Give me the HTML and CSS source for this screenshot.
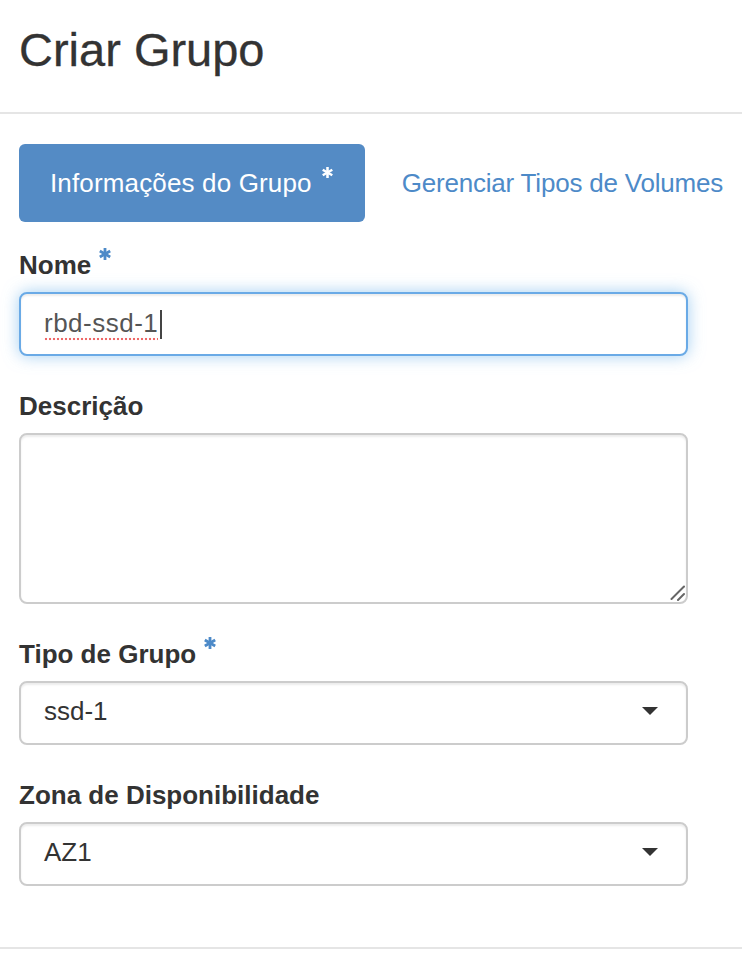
FILE: index.html
```html
<!DOCTYPE html>
<html lang="pt-BR">
<head>
<meta charset="utf-8">
<title>Criar Grupo</title>
<link rel="stylesheet" href="styles.css">
</head>
<body>
<div class="modal">
  <div class="modal-header">
    <h3 class="modal-title">Criar Grupo</h3>
  </div>
  <div class="modal-body">
    <ul class="tabs">
      <li class="tab tab-active">Informações do Grupo<svg class="req req-tab" viewBox="0 0 12 12" width="11" height="11"><g stroke="currentColor" stroke-width="2.8"><line x1="6" y1="0" x2="6" y2="12"/><line x1="0.8" y1="3" x2="11.2" y2="9"/><line x1="0.8" y1="9" x2="11.2" y2="3"/></g></svg></li>
      <li class="tab tab-link">Gerenciar Tipos de Volumes</li>
    </ul>
    <form class="form">
      <div class="form-group">
        <label class="label">Nome<svg class="req" viewBox="0 0 12 12" width="12" height="12"><g stroke="currentColor" stroke-width="2.8"><line x1="6" y1="0" x2="6" y2="12"/><line x1="0.8" y1="3" x2="11.2" y2="9"/><line x1="0.8" y1="9" x2="11.2" y2="3"/></g></svg></label>
        <div class="control control-focus"><span class="typed">rbd-ssd-1</span><span class="caret"></span></div>
      </div>
      <div class="form-group">
        <label class="label">Descrição</label>
        <div class="textarea-wrap">
          <textarea class="textarea"></textarea>
          <svg class="grip" viewBox="0 0 16 16" width="16" height="16"><g stroke="#666" stroke-width="2" stroke-linecap="round"><line x1="2.5" y1="14" x2="15" y2="1.5"/><line x1="9" y1="15" x2="15" y2="9"/></g></svg>
        </div>
      </div>
      <div class="form-group">
        <label class="label">Tipo de Grupo<svg class="req" viewBox="0 0 12 12" width="12" height="12"><g stroke="currentColor" stroke-width="2.8"><line x1="6" y1="0" x2="6" y2="12"/><line x1="0.8" y1="3" x2="11.2" y2="9"/><line x1="0.8" y1="9" x2="11.2" y2="3"/></g></svg></label>
        <div class="control select"><span>ssd-1</span><svg class="arrow" viewBox="0 0 16 8" width="16" height="8"><path d="M0 0H16L8 8Z" fill="#333"/></svg></div>
      </div>
      <div class="form-group">
        <label class="label">Zona de Disponibilidade</label>
        <div class="control select"><span>AZ1</span><svg class="arrow" viewBox="0 0 16 8" width="16" height="8"><path d="M0 0H16L8 8Z" fill="#333"/></svg></div>
      </div>
    </form>
  </div>
  <div class="modal-footer"></div>
</div>
</body>
</html>
```

FILE: styles.css
```css
html, body {
  margin: 0;
  padding: 0;
  background: #fff;
  overflow: hidden;
}

body {
  font-family: "Liberation Sans", Arial, Helvetica, sans-serif;
  color: #333;
}

.modal {
  width: 742px;
}

.modal-header {
  padding: 25px 19px 37px;
  border-bottom: 2px solid #e5e5e5;
}

.modal-title {
  margin: 0;
  font-size: 47px;
  font-weight: normal;
  line-height: 50px;
  color: #333;
  -webkit-text-stroke: 0.3px #333;
}

.modal-body {
  padding: 30px 19px 61px;
}

.tabs {
  list-style: none;
  margin: 0;
  padding: 0;
  display: flex;
  gap: 6px;
}

.tab {
  font-size: 26px;
  line-height: 36px;
  padding: 21px 31px;
  white-space: nowrap;
  flex-shrink: 0;
}

.tab-active {
  background: #548bc5;
  color: #fff;
  border-radius: 6px;
  padding-right: 32px;
  letter-spacing: 0.15px;
}

.tab-link {
  color: #4d8ac8;
  padding-right: 0;
  letter-spacing: -0.2px;
}

.req {
  color: #4d8ac8;
  margin-left: 8px;
  vertical-align: 14px;
}

.req-tab {
  color: #fff;
  margin-left: 10px;
}

.form {
  margin-top: 25px;
}

.form-group + .form-group {
  margin-top: 32px;
}

.label {
  display: block;
  font-size: 26px;
  font-weight: bold;
  line-height: 36px;
  margin-bottom: 9px;
  color: #333;
}

.control {
  box-sizing: border-box;
  height: 64px;
  width: 669px;
  border: 2px solid #ccc;
  border-radius: 8px;
  font-size: 26px;
  line-height: 36px;
  display: flex;
  align-items: center;
  padding: 0 23px 2px;
  box-shadow: inset 0 2px 2px rgba(0, 0, 0, 0.075);
  background: #fff;
}

.control-focus {
  border-color: #6aaae6;
  color: #555;
  box-shadow: inset 0 2px 2px rgba(0, 0, 0, 0.075), 0 0 16px rgba(102, 175, 233, 0.6);
}

.typed {
  letter-spacing: 0.5px;
  padding-bottom: 0;
  background-image: radial-gradient(circle at 50% 50%, #ee6868 0, #ee6868 1px, rgba(238, 104, 104, 0) 1.6px);
  background-size: 4px 4px;
  background-repeat: repeat-x;
  background-position: 0 100%;
}

.caret {
  display: inline-block;
  width: 2px;
  height: 29px;
  background: #444;
  margin-left: 2px;
  margin-top: 2px;
}

.textarea-wrap {
  position: relative;
  width: 669px;
}

.textarea {
  display: block;
  box-sizing: border-box;
  width: 669px;
  height: 171px;
  margin: 0;
  border: 2px solid #ccc;
  border-radius: 8px;
  padding: 12px 23px;
  font-family: "Liberation Sans", Arial, sans-serif;
  font-size: 26px;
  box-shadow: inset 0 2px 2px rgba(0, 0, 0, 0.075);
  resize: none;
  outline: none;
}

.grip {
  position: absolute;
  right: 3px;
  bottom: 3px;
}

.select {
  justify-content: space-between;
  padding: 0 28px 4px 23px;
  color: #333;
}

.arrow {
  flex-shrink: 0;
}

.modal-footer {
  border-top: 2px solid #e5e5e5;
  height: 20px;
}
```
